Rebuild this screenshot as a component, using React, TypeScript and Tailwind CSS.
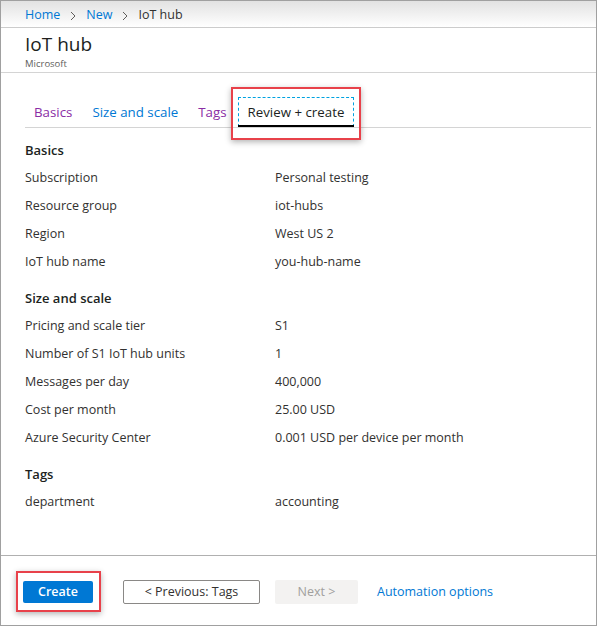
const sections = [
  {
    title: "Basics",
    rows: [
      ["Subscription", "Personal testing"],
      ["Resource group", "iot-hubs"],
      ["Region", "West US 2"],
      ["IoT hub name", "you-hub-name"],
    ],
  },
  {
    title: "Size and scale",
    rows: [
      ["Pricing and scale tier", "S1"],
      ["Number of S1 IoT hub units", "1"],
      ["Messages per day", "400,000"],
      ["Cost per month", "25.00 USD"],
      ["Azure Security Center", "0.001 USD per device per month"],
    ],
  },
  {
    title: "Tags",
    rows: [["department", "accounting"]],
  },
];

function Chevron() {
  return (
    <svg width="8" height="10" viewBox="0 0 8 10" className="mx-[9px] text-[#605e5c]" aria-hidden="true">
      <path d="M2 1l4 4-4 4" fill="none" stroke="currentColor" strokeWidth="1" />
    </svg>
  );
}

export default function App() {
  return (
    <div
      className="flex h-[626px] w-[597px] flex-col border border-[#a0a0a0] bg-white text-[13px] text-[#323130]"
      style={{ fontFamily: '"Open Sans", "Noto Sans", sans-serif' }}
    >
      <div className="flex h-[27px] items-center border-b border-[#cccccc] bg-gradient-to-b from-[#e2e2e2] to-white px-6 pt-[3px] text-[12.5px]">
        <span className="text-[#0078d4]">Home</span>
        <Chevron />
        <span className="text-[#0078d4]">New</span>
        <Chevron />
        <span>IoT hub</span>
      </div>

      <div className="h-[45px] border-b border-[#d4d4d4] px-6 pt-[2px]">
        <div className="text-[19px] leading-[28px] text-[#201f1e]">IoT hub</div>
        <div className="text-[9.5px] leading-[12px] text-[#605e5c]">Microsoft</div>
      </div>

      <div className="ml-6 mr-[5px] mt-[24px] flex h-[31px] items-stretch border-b border-[#d4d4d4] text-[13.3px]">
        <div className="ml-[9px] flex items-center pt-[1px] text-[#8a2da5]">Basics</div>
        <div className="ml-[20px] flex items-center pt-[1px] text-[#0078d4]">Size and scale</div>
        <div className="ml-[20px] flex items-center pt-[1px] text-[#8a2da5]">Tags</div>
        <div className="relative ml-[11px] flex items-center">
          <div className="pointer-events-none absolute -bottom-[13px] -left-[7px] -right-[7px] -top-[10px] border-2 border-[#e8414a] shadow-[0_2px_6px_rgba(0,0,0,0.3)]" />
          <div className="flex h-full items-center border border-dashed border-[#00a2e0] px-[9px] pt-[1px]">
            <span className="text-[#201f1e]">Review + create</span>
          </div>
          <div className="absolute bottom-0 left-0 right-0 h-[2px] bg-black" />
        </div>
      </div>

      <div className="px-6 pt-[8px]">
        {sections.map((s) => (
          <div key={s.title} className="mb-[8px]">
            <div className="h-[28px] font-semibold leading-[28px] text-[#201f1e]">{s.title}</div>
            {s.rows.map(([k, v]) => (
              <div key={k} className="grid h-[28px] grid-cols-[250px_1fr] items-center text-[12.5px]">
                <span>{k}</span>
                <span>{v}</span>
              </div>
            ))}
          </div>
        ))}
      </div>

      <div className="mt-auto flex h-[70px] items-center border-t border-[#b0b0b0] pl-[22px] pt-[3px] text-[12.5px]">
        <div className="relative">
          <div className="pointer-events-none absolute -bottom-[9px] -left-[7px] -right-[8px] -top-[10px] border-2 border-[#e8414a] shadow-[0_2px_6px_rgba(0,0,0,0.3)]" />
          <button className="flex h-[22px] w-[70px] items-center justify-center rounded-[2px] bg-[#0078d4] font-semibold text-white">
            Create
          </button>
        </div>
        <button className="ml-[30px] flex h-[24px] w-[137px] items-center justify-center rounded-[2px] border border-[#8a8886] bg-white text-[#323130]">
          &lt; Previous: Tags
        </button>
        <button className="ml-[15px] flex h-[24px] w-[83px] items-center justify-center rounded-[2px] bg-[#f3f2f1] text-[#a19f9d]">
          Next &gt;
        </button>
        <span className="ml-[19px] text-[#0078d4]">Automation options</span>
      </div>
    </div>
  );
}
